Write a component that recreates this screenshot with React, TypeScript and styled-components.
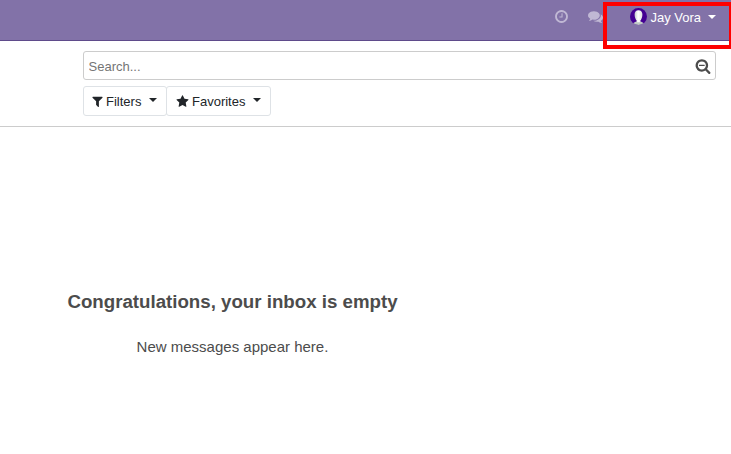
import React from "react";
import styled, { createGlobalStyle } from "styled-components";

const GlobalStyle = createGlobalStyle`
  *, *::before, *::after { box-sizing: border-box; }
  html, body { margin: 0; height: 100%; overflow: hidden; }
  body {
    background: #fff;
    color: #4c4c4c;
    font: 13px/20px "Liberation Sans", Arial, sans-serif;
  }
`;

const Page = styled.div`
  position: relative;
  display: flex;
  flex-direction: column;
  height: 454px;
  overflow: hidden;
`;

const Navbar = styled.header`
  display: flex;
  justify-content: flex-end;
  align-items: flex-start;
  height: 41px;
  padding: 7px 15px 0 0;
  background: #8272a8;
  border-bottom: 1px solid #5f4b8b;
`;

const Icon = styled.svg<{ $size: number }>`
  display: block;
  flex: none;
  width: ${(p) => p.$size}px;
  height: ${(p) => p.$size}px;
  fill: currentColor;
`;

const SystrayButton = styled.div<{ $gap: number }>`
  display: flex;
  align-items: center;
  height: 19px;
  margin-right: ${(p) => p.$gap}px;
  color: #c0b8d4;
`;

const UserMenu = styled.div`
  display: flex;
  align-items: center;
  height: 20px;
  color: #fff;
`;

const UserName = styled.span`
  padding-top: 2px;
`;

const Avatar = styled.svg`
  display: block;
  width: 17px;
  height: 17px;
  margin: 0 3.500px 1px 0;
`;

const Caret = styled.span<{ $gap: number; $lift?: number }>`
  width: 0;
  height: 0;
  margin: 0 0 ${(p) => p.$lift ?? 0}px ${(p) => p.$gap}px;
  border: 4px solid transparent;
  border-top-color: currentColor;
  border-bottom: 0;
`;

const Highlight = styled.div`
  position: absolute;
  top: 2px;
  left: 603px;
  width: 130px;
  height: 47px;
  border: 4px solid #fe0000;
`;

const ControlPanel = styled.section`
  display: flex;
  flex-direction: column;
  gap: 6px;
  height: 86px;
  padding: 10px 15px 0 83px;
  border-bottom: 1px solid #ccc;
`;

const SearchBox = styled.label`
  display: flex;
  align-items: center;
  height: 29px;
  padding: 1px 4px 0 4.500px;
  border: 1px solid #ccc;
  border-radius: 3px;
`;

const SearchInput = styled.input`
  flex: 1;
  min-width: 0;
  padding: 2px 0 0;
  border: 0;
  outline: 0;
  background: transparent;
  font: inherit;
  color: inherit;
  &::placeholder { color: #757575; opacity: 1; }
`;

const ButtonRow = styled.div`
  display: flex;
`;

const DropdownButton = styled.button<{ $width: number; $inset: number }>`
  display: flex;
  align-items: center;
  width: ${(p) => p.$width}px;
  height: 30px;
  padding: 0 0 0 ${(p) => p.$inset}px;
  border: 1px solid #dee2e6;
  border-radius: 3px;
  background: #fff;
  color: #212529;
  font: inherit;
  & + & { margin-left: -1px; }
`;

const ButtonLabel = styled.span<{ $gap: number }>`
  margin-left: ${(p) => p.$gap}px;
  padding-top: 2px;
`;

const EmptyState = styled.main`
  display: flex;
  flex-direction: column;
  align-items: center;
  width: 465px;
  padding-top: 163px;
  white-space: nowrap;
`;

const Title = styled.h1`
  margin: 0;
  font-size: 18.7px;
  line-height: 24px;
  font-weight: 700;
`;

const Message = styled.p`
  margin: 23px 0 0;
  font-size: 15px;
  line-height: 20px;
`;

const paths = {
  clock:
    "M1024 544v448q0 14-9 23t-23 9h-320q-14 0-23-9t-9-23v-64q0-14 9-23t23-9h224v-352q0-14 9-23t23-9h64q14 0 23 9t9 23zm416 352q0-148-73-273t-198-198-273-73-273 73-198 198-73 273 73 273 198 198 273 73 273-73 198-198 73-273zm224 0q0 209-103 385.5t-279.5 279.5-385.5 103-385.5-103-279.5-279.5-103-385.5 103-385.5 279.5-279.5 385.5-103 385.5 103 279.5 279.5 103 385.5z",
  comments:
    "M1408 768q0 139-94 257t-256.5 186.5-353.5 68.5q-86 0-176-16-124 88-278 128-36 9-86 16h-3q-11 0-20.5-8t-11.5-21q-1-3-1-6.5t.5-6.5 2-6l2.5-5 3.5-5.5 4-5 4.5-5 4-4.5q5-6 23-25t26-29.5 22.5-29 25-38.5 20.5-44q-124-72-195-177t-71-224q0-139 94-257t256.5-186.5 353.5-68.5 353.5 68.5 256.5 186.5 94 257zm384 256q0 120-71 224.5t-195 176.5q10 24 20.5 44t25 38.5 22.5 29 26 29.5 23 25q1 1 4 4.5t4.5 5 4 5 3.5 5.5l2.5 5 2 6 .5 6.5-1 6.5q-3 14-13 22t-22 7q-50-7-86-16-154-40-278-128-90 16-176 16-271 0-472-132 58 4 88 4 161 0 309-45t264-129q125-92 192-212t67-254q0-77-23-152 129 71 204 178t75 230z",
  filter:
    "M1595 295q17 41-14 70l-493 493v742q0 42-39 59-13 5-25 5-27 0-45-19l-256-256q-19-19-19-45v-486l-493-493q-31-29-14-70 17-39 59-39h1280q42 0 59 39z",
  star:
    "M1728 647q0 22-26 48l-363 354 86 500q1 7 1 20 0 21-10.5 35.5t-30.5 14.5q-19 0-40-12l-449-236-449 236q-22 12-40 12-21 0-31.5-14.5t-10.5-35.5q0-6 2-20l86-500-364-354q-25-27-25-48 0-37 56-46l502-73 225-455q19-41 49-41t49 41l225 455 502 73q56 9 56 46z",
  searchMinus:
    "M1088 800v64q0 13-9.5 22.5t-22.5 9.5h-576q-13 0-22.5-9.5t-9.5-22.5v-64q0-13 9.5-22.5t22.5-9.5h576q13 0 22.5 9.5t9.5 22.5zm128 32q0-185-131.5-316.5t-316.5-131.5-316.5 131.5-131.5 316.5 131.5 316.5 316.5 131.5 316.5-131.5 131.5-316.5zm512 832q0 53-37.5 90.5t-90.5 37.5q-54 0-90-38l-343-342q-179 124-399 124-143 0-273.5-55.5t-225-150-150-225-55.5-273.5 55.5-273.5 150-225 225-150 273.5-55.5 273.5 55.5 225 150 150 225 55.5 273.5q0 220-124 399l343 343q37 37 37 90z",
};

function Glyph({ name, size }: { name: keyof typeof paths; size: number }) {
  return (
    <Icon $size={size} viewBox="0 0 1792 1792" aria-hidden="true">
      <path d={paths[name]} />
    </Icon>
  );
}

function UserAvatar() {
  return (
    <Avatar viewBox="0 0 17 17" aria-hidden="true">
      <defs>
        <clipPath id="avatar-circle">
          <circle cx="8.5" cy="8.5" r="8.5" />
        </clipPath>
        <linearGradient id="avatar-shade" x1="0" x2="1" y1="0" y2="0">
          <stop offset="0" stopColor="#c3cbc9" />
          <stop offset="0.45" stopColor="#ffffff" />
          <stop offset="1" stopColor="#dfe2e2" />
        </linearGradient>
      </defs>
      <g clipPath="url(#avatar-circle)">
        <rect width="17" height="17" fill="#430092" />
        <path
          d="M3.200 17v-1.700c.8-.9 2.200-1.300 3.500-1.800h3.600c1.300.5 2.700.9 3.500 1.800V17z"
          fill="#bfc9c4"
        />
        <path
          d="M8.500 2.200C5.900 2.200 4.500 4.100 4.600 6.700c.1 2.500.9 4.500 2 5.700v1.800h3.800v-1.800c1.100-1.200 1.900-3.200 2-5.700.1-2.600-1.300-4.500-3.900-4.500z"
          fill="url(#avatar-shade)"
        />
      </g>
    </Avatar>
  );
}

export default function App() {
  return (
    <Page>
      <GlobalStyle />
      <Navbar>
        <SystrayButton $gap={19}>
          <Glyph name="clock" size={15} />
        </SystrayButton>
        <SystrayButton $gap={26.5}>
          <Glyph name="comments" size={15} />
        </SystrayButton>
        <UserMenu>
          <UserAvatar />
          <UserName>Jay Vora</UserName>
          <Caret $gap={7} />
        </UserMenu>
      </Navbar>
      <ControlPanel>
        <SearchBox>
          <SearchInput placeholder="Search..." />
          <Glyph name="searchMinus" size={16} />
        </SearchBox>
        <ButtonRow>
          <DropdownButton $width={84} $inset={7}>
            <Glyph name="filter" size={13} />
            <ButtonLabel $gap={2}>Filters</ButtonLabel>
            <Caret $gap={7.5} $lift={3} />
          </DropdownButton>
          <DropdownButton $width={105} $inset={9}>
            <Glyph name="star" size={13} />
            <ButtonLabel $gap={3}>Favorites</ButtonLabel>
            <Caret $gap={7.5} $lift={3} />
          </DropdownButton>
        </ButtonRow>
      </ControlPanel>
      <EmptyState>
        <Title>Congratulations, your inbox is empty</Title>
        <Message>New messages appear here.</Message>
      </EmptyState>
      <Highlight />
    </Page>
  );
}
